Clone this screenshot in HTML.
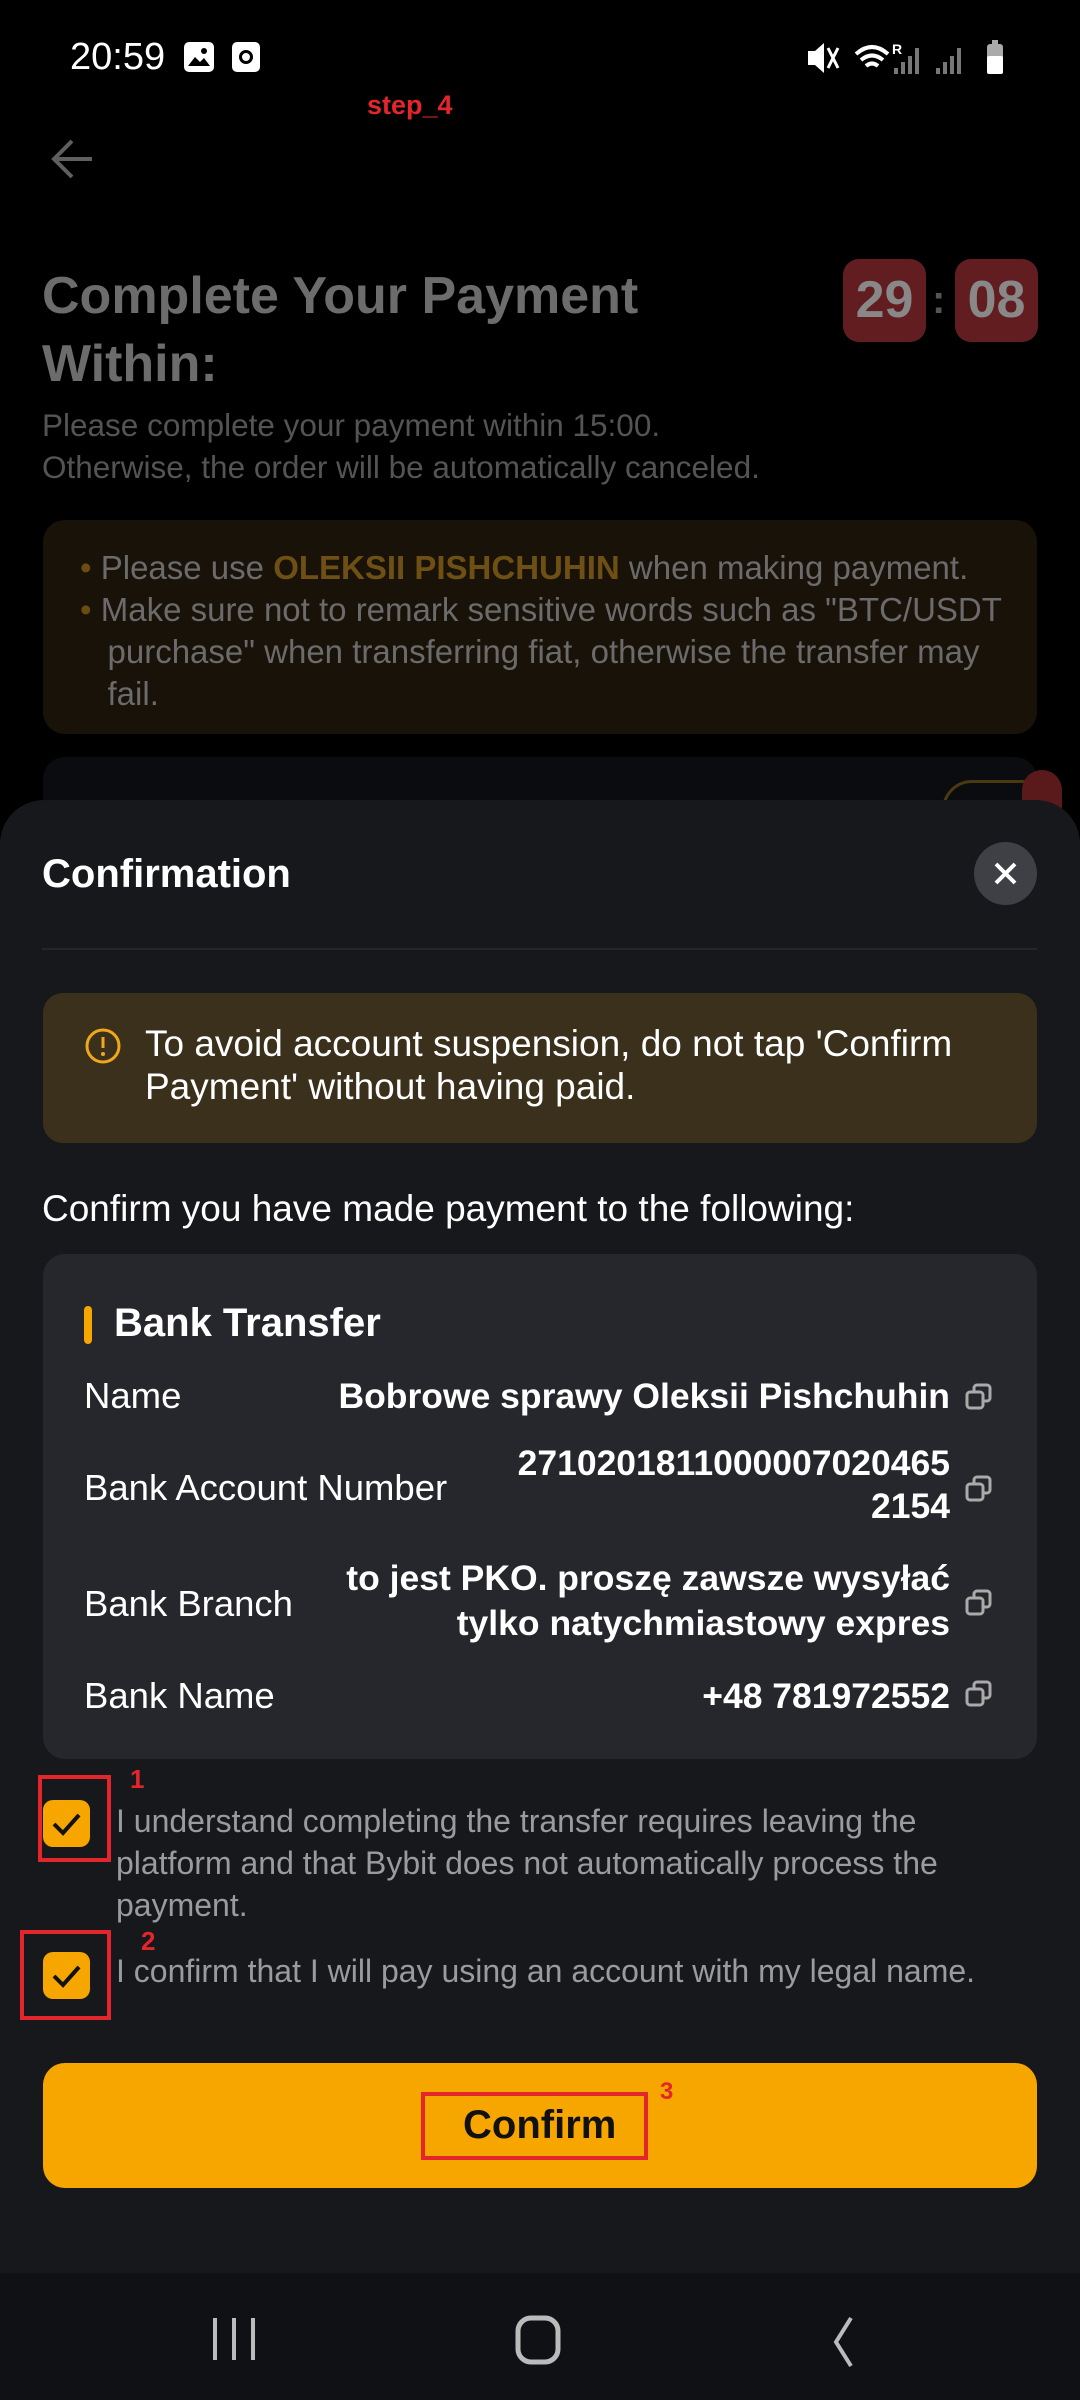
<!DOCTYPE html>
<html><head><meta charset="utf-8">
<style>
*{margin:0;padding:0;box-sizing:border-box}
body{width:1080px;height:2400px;background:#000;position:relative;overflow:hidden;font-family:"Liberation Sans",sans-serif;color:#fff}
.a{position:absolute;white-space:nowrap}
</style></head><body>
<div class="a" style="left:70px;top:36px;font-size:38px;color:#fff">20:59</div>
<div class="a" style="left:184px;top:42px;width:30px;height:30px;border-radius:5px;background:#fff"><svg width="30" height="30"><path d="M4 24 L11 15 L16 20 L20 16 L26 24Z" fill="#000"/><circle cx="20" cy="9" r="3" fill="#000"/></svg></div>
<div class="a" style="left:232px;top:42px;width:28px;height:30px;border-radius:5px;background:#fff"><div style="position:absolute;left:7px;top:8px;width:14px;height:14px;border-radius:50%;border:3px solid #000"></div></div>
<svg class="a" style="left:800px;top:36px" width="220" height="44"><path d="M8 15h7l9-8v30l-9-8H8z" fill="#fff"/><path d="M28 12l10 20M38 12l-10 20" stroke="#fff" stroke-width="3"/><path d="M56 18q16-14 32 0M61 24q11-9 22 0M66 30q6-5 12 0" stroke="#fff" stroke-width="4" fill="none"/><text x="92" y="18" font-size="14" fill="#fff" font-family="Liberation Sans" font-weight="bold">R</text><path d="M96 38v-6M103 38v-12M110 38v-18M117 38v-26" stroke="#777" stroke-width="4"/><path d="M138 38v-6M145 38v-12M152 38v-18M159 38v-26" stroke="#777" stroke-width="4"/><rect x="187" y="8" width="16" height="30" rx="3" fill="#aaa"/><rect x="187" y="20" width="16" height="18" rx="2" fill="#fff"/><rect x="192" y="4" width="6" height="5" fill="#aaa"/></svg>
<div class="a" style="left:367px;top:90px;font-size:27px;font-weight:bold;color:#e3262b">step_4</div>
<svg class="a" style="left:48px;top:136px" width="50" height="46"><path d="M44 23H6M24 5L6 23l18 18" stroke="#5f5f5f" stroke-width="4" fill="none"/></svg>
<div class="a" style="left:42px;top:262px;font-size:52px;font-weight:bold;color:#6c6c6c;line-height:68px">Complete Your Payment<br>Within:</div>
<div class="a" style="left:843px;top:259px;width:83px;height:83px;border-radius:16px;background:#621d21;color:#888;font-size:52px;font-weight:bold;text-align:center;line-height:83px">29</div>
<div class="a" style="left:932px;top:278px;font-size:40px;color:#555;font-weight:bold">:</div>
<div class="a" style="left:955px;top:259px;width:83px;height:83px;border-radius:16px;background:#621d21;color:#888;font-size:52px;font-weight:bold;text-align:center;line-height:83px">08</div>
<div class="a" style="left:42px;top:404px;font-size:31.5px;color:#545454;line-height:42px">Please complete your payment within 15:00.<br>Otherwise, the order will be automatically canceled.</div>
<div class="a" style="left:43px;top:520px;width:994px;height:214px;border-radius:22px;background:#181208"></div>
<div class="a" style="left:80px;top:547px;font-size:33px;color:#6b6b6b;line-height:42px"><span style="color:#6b4d12">•</span> Please use <b style="color:#6f5014">OLEKSII PISHCHUHIN</b> when making payment.<br><span style="color:#6b4d12">•</span> Make sure not to remark sensitive words such as "BTC/USDT<br>&nbsp;&nbsp; purchase" when transferring fiat, otherwise the transfer may<br>&nbsp;&nbsp; fail.</div>
<div class="a" style="left:43px;top:757px;width:994px;height:100px;border-radius:22px;background:#0b0c0f"></div>
<div class="a" style="left:942px;top:780px;width:110px;height:60px;border-radius:30px;border:3px solid #4a3a12"></div>
<div class="a" style="left:1022px;top:770px;width:40px;height:60px;border-radius:20px;background:#5a1a1c"></div>
<div class="a" style="left:0;top:800px;width:1080px;height:1480px;border-radius:44px 44px 0 0;background:#17181c"></div>
<div class="a" style="left:42px;top:852px;font-size:40px;font-weight:bold;color:#fff">Confirmation</div>
<div class="a" style="left:974px;top:842px;width:63px;height:63px;border-radius:50%;background:#3e4046"><svg width="63" height="63"><path d="M22 22l19 19M41 22l-19 19" stroke="#fff" stroke-width="4"/></svg></div>
<div class="a" style="left:42px;top:948px;width:995px;height:2px;background:#25272b"></div>
<div class="a" style="left:43px;top:993px;width:994px;height:150px;border-radius:20px;background:#3b301b"></div>
<svg class="a" style="left:84px;top:1027px" width="38" height="38"><circle cx="19" cy="19" r="16" stroke="#f0a81a" stroke-width="3" fill="none"/><path d="M19 10v11" stroke="#f0a81a" stroke-width="3"/><circle cx="19" cy="27" r="2" fill="#f0a81a"/></svg>
<div class="a" style="left:145px;top:1022px;font-size:37px;color:#fff;line-height:43px">To avoid account suspension, do not tap 'Confirm<br>Payment' without having paid.</div>
<div class="a" style="left:42px;top:1188px;font-size:37px;color:#fff">Confirm you have made payment to the following:</div>
<div class="a" style="left:43px;top:1254px;width:994px;height:505px;border-radius:22px;background:#25272c"></div>
<div class="a" style="left:84px;top:1306px;width:8px;height:38px;border-radius:4px;background:#f7a600"></div>
<div class="a" style="left:114px;top:1301px;font-size:40px;font-weight:bold;color:#fff">Bank Transfer</div>
<div class="a" style="left:84px;top:1375px;font-size:36.5px;color:#fff">Name</div>
<div class="a" style="right:130px;top:1376px;font-size:35.5px;font-weight:bold;color:#fff">Bobrowe sprawy Oleksii Pishchuhin</div>
<div class="a" style="left:84px;top:1467px;font-size:36.5px;color:#fff">Bank Account Number</div>
<div class="a" style="right:130px;top:1442px;font-size:35.5px;font-weight:bold;color:#fff;text-align:right;line-height:43px">2710201811000007020465<br>2154</div>
<div class="a" style="left:84px;top:1583px;font-size:36.5px;color:#fff">Bank Branch</div>
<div class="a" style="right:130px;top:1556px;font-size:35.5px;font-weight:bold;color:#fff;text-align:right;line-height:45px">to jest PKO. proszę zawsze wysyłać<br>tylko natychmiastowy expres</div>
<div class="a" style="left:84px;top:1675px;font-size:36.5px;color:#fff">Bank Name</div>
<div class="a" style="right:130px;top:1676px;font-size:35.5px;font-weight:bold;color:#fff">+48 781972552</div>
<svg class="a" style="left:964px;top:1382px" width="30" height="30"><rect x="10" y="3" width="16" height="16" rx="3" stroke="#aaa" stroke-width="3" fill="none"/><rect x="3" y="10" width="16" height="16" rx="3" stroke="#aaa" stroke-width="3" fill="#25272c"/></svg>
<svg class="a" style="left:964px;top:1474px" width="30" height="30"><rect x="10" y="3" width="16" height="16" rx="3" stroke="#aaa" stroke-width="3" fill="none"/><rect x="3" y="10" width="16" height="16" rx="3" stroke="#aaa" stroke-width="3" fill="#25272c"/></svg>
<svg class="a" style="left:964px;top:1588px" width="30" height="30"><rect x="10" y="3" width="16" height="16" rx="3" stroke="#aaa" stroke-width="3" fill="none"/><rect x="3" y="10" width="16" height="16" rx="3" stroke="#aaa" stroke-width="3" fill="#25272c"/></svg>
<svg class="a" style="left:964px;top:1679px" width="30" height="30"><rect x="10" y="3" width="16" height="16" rx="3" stroke="#aaa" stroke-width="3" fill="none"/><rect x="3" y="10" width="16" height="16" rx="3" stroke="#aaa" stroke-width="3" fill="#25272c"/></svg>
<div class="a" style="left:43px;top:1800px;width:47px;height:47px;border-radius:10px;background:#f7a600"><svg width="47" height="47"><path d="M11 24l9 9 16-18" stroke="#111" stroke-width="4" fill="none"/></svg></div>
<div class="a" style="left:38px;top:1775px;width:73px;height:87px;border:4px solid #e3262b"></div>
<div class="a" style="left:130px;top:1764px;font-size:26px;font-weight:bold;color:#e3262b">1</div>
<div class="a" style="left:116px;top:1800px;font-size:32px;color:#9a9b9e;line-height:42px">I understand completing the transfer requires leaving the<br>platform and that Bybit does not automatically process the<br>payment.</div>
<div class="a" style="left:43px;top:1952px;width:47px;height:47px;border-radius:10px;background:#f7a600"><svg width="47" height="47"><path d="M11 24l9 9 16-18" stroke="#111" stroke-width="4" fill="none"/></svg></div>
<div class="a" style="left:20px;top:1930px;width:91px;height:90px;border:4px solid #e3262b"></div>
<div class="a" style="left:141px;top:1926px;font-size:26px;font-weight:bold;color:#e3262b">2</div>
<div class="a" style="left:116px;top:1953px;font-size:32px;color:#9a9b9e">I confirm that I will pay using an account with my legal name.</div>
<div class="a" style="left:43px;top:2063px;width:994px;height:125px;border-radius:22px;background:#f7a600"></div>
<div class="a" style="left:421px;top:2092px;width:227px;height:68px;border:4px solid #e3262b"></div>
<div class="a" style="left:463px;top:2103px;font-size:40px;font-weight:bold;color:#111">Confirm</div>
<div class="a" style="left:660px;top:2078px;font-size:24px;font-weight:bold;color:#e3262b">3</div>
<div class="a" style="left:0;top:2273px;width:1080px;height:127px;background:#101114"></div>
<svg class="a" style="left:200px;top:2310px" width="700" height="60"><path d="M15 8v42M34 8v42M53 8v42" stroke="#bbb" stroke-width="4"/><rect x="318" y="8" width="40" height="44" rx="13" stroke="#bbb" stroke-width="5" fill="none"/><path d="M651 8l-15 24 15 24" stroke="#bbb" stroke-width="4" fill="none"/></svg>
</body></html>
